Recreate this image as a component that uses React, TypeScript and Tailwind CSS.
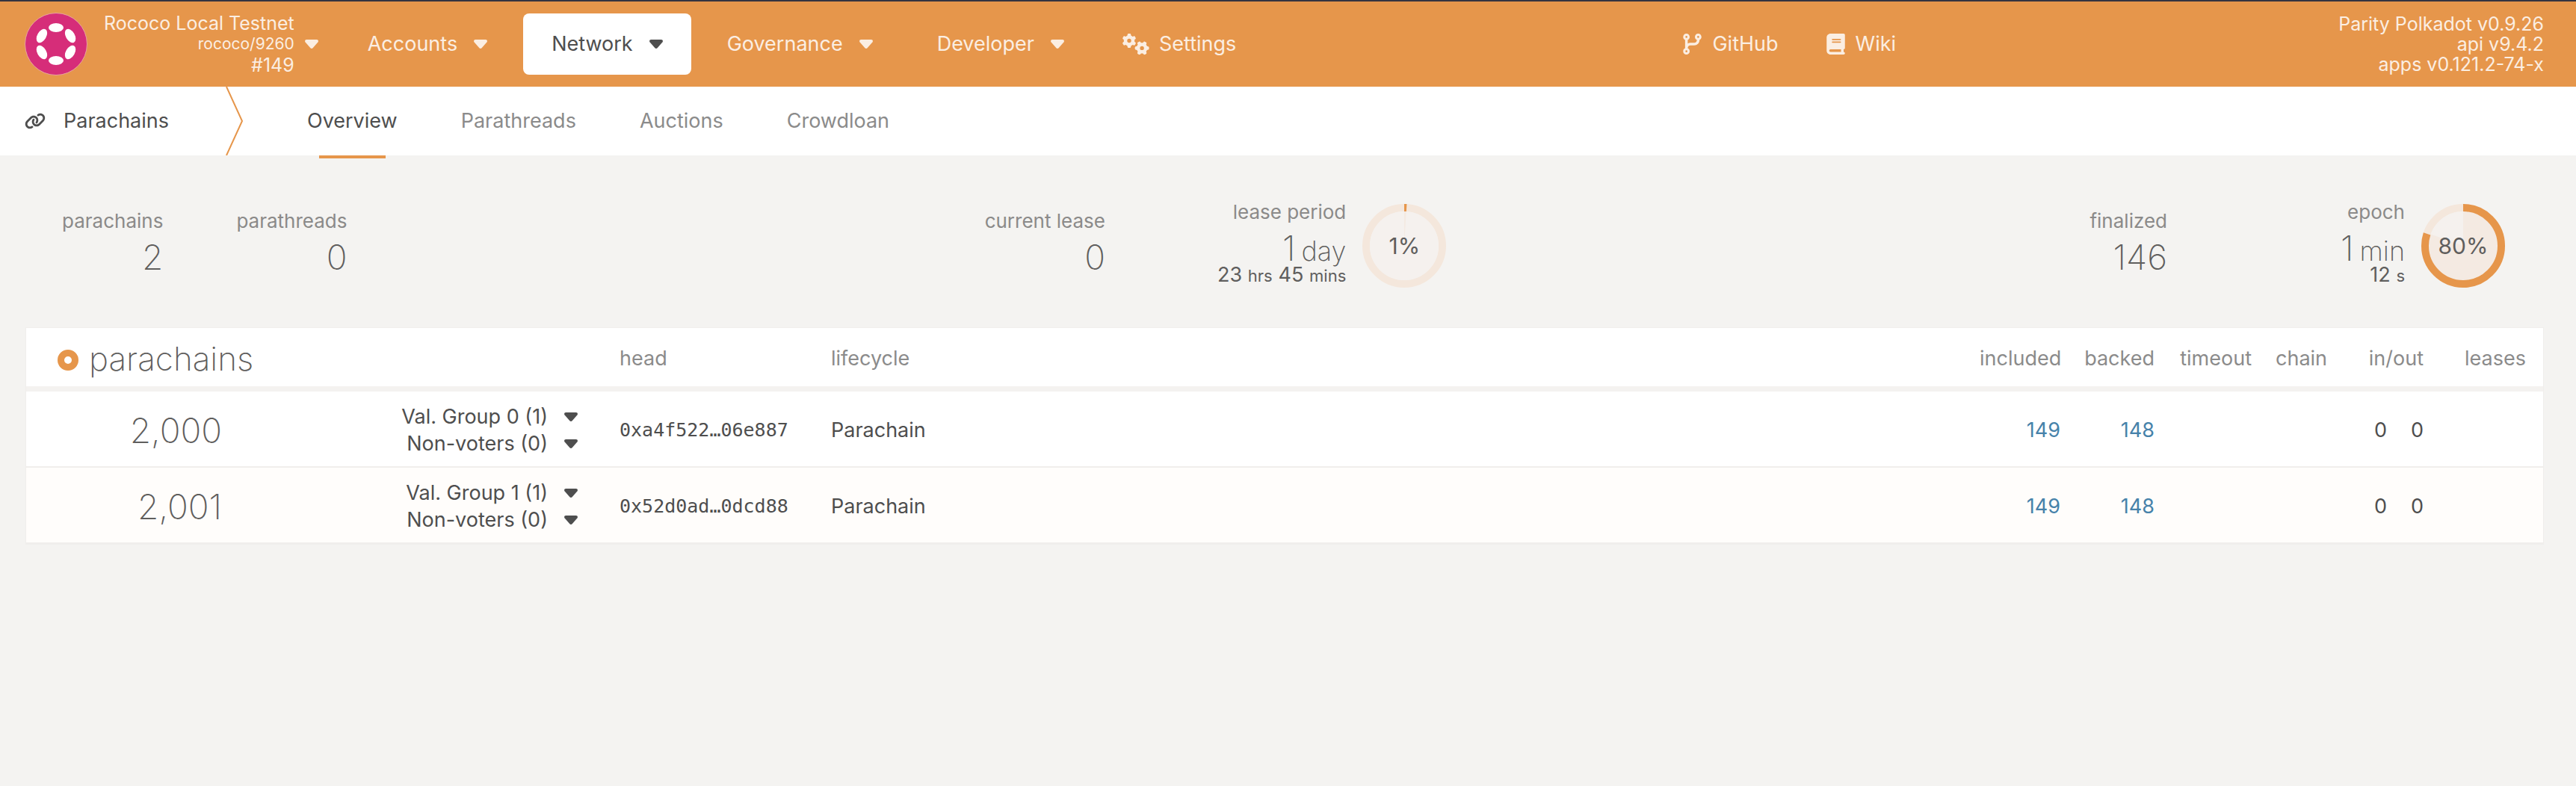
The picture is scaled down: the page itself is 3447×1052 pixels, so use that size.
import { FaBook, FaCodeBranch, FaGears, FaLink } from "react-icons/fa6";

const menu = ["Accounts", "Network", "Governance", "Developer"];
const tabs = ["Overview", "Parathreads", "Auctions", "Crowdloan"];
const rows = [
  { id: "2,000", group: "Val. Group 0 (1)", head: "0xa4f522…06e887" },
  { id: "2,001", group: "Val. Group 1 (1)", head: "0x52d0ad…0dcd88" },
];

function Caret() {
  return (
    <svg viewBox="0 0 18 12" className="h-3 w-[18px] shrink-0 fill-current" aria-hidden="true">
      <path d="M2.2 0h13.6c1.9 0 2.8 2 1.6 3.4l-6.8 7.8c-.9 1-2.3 1-3.2 0L.6 3.4C-.6 2 .3 0 2.2 0z" />
    </svg>
  );
}

function Logo() {
  return (
    <svg viewBox="0 0 84 84" className="size-[84px] shrink-0" role="img" aria-label="Network logo">
      <circle cx="42" cy="42" r="41.5" fill="#d62d79" stroke="#e8a3a0" />
      <g fill="#fff">
        {[0, 60, 120, 180, 240, 300].map((a) => (
          <ellipse key={a} cx="42" cy="20" rx="10" ry="6" transform={`rotate(${a} 42 42)`} />
        ))}
      </g>
    </svg>
  );
}

function Ring({ value }: { value: number }) {
  const len = (r: number) => `${(value / 100) * 2 * Math.PI * r} 1000`;
  return (
    <div className="grid size-28 shrink-0 place-items-center">
      <svg viewBox="0 0 112 112" className="col-start-1 row-start-1 size-28 -rotate-90" fill="none" aria-hidden="true">
        <circle cx="56" cy="56" r="51" stroke="#f4e7dc" strokeWidth="10" />
        <circle cx="56" cy="56" r="46" fill="#f5f1ee" />
        <circle cx="56" cy="56" r="23" stroke="#f4eae2" strokeWidth="46" strokeDasharray={len(23)} />
        <circle cx="56" cy="56" r="51" stroke="#e6964b" strokeWidth="10" strokeDasharray={len(51)} />
      </svg>
      <span className="z-10 col-start-1 row-start-1 text-[30px] leading-9 text-[#5f5e5d]">{value}%</span>
    </div>
  );
}

type StatProps = { label: string; value: string; unit?: string; detail?: [string, string][] };

function Stat({ label, value, unit, detail }: StatProps) {
  return (
    <div className="flex flex-col items-end pb-[10px]">
      <span className="text-[26px] leading-9 text-[#8b8a89]">{label}</span>
      <span className="mt-1 text-[46px] leading-[52px] font-extralight text-[#5f5e5d]">
        {value}
        {unit && <span className="ml-2 text-4xl">{unit}</span>}
      </span>
      {detail && (
        <span className="-mt-1 flex items-baseline gap-2 text-[27px] leading-7 text-[#5f5e5d]">
          {detail.map(([n, u]) => (
            <span key={u}>
              {n} <span className="text-[22px]">{u}</span>
            </span>
          ))}
        </span>
      )}
    </div>
  );
}

export default function App() {
  return (
    <div className="min-h-screen bg-[#f4f3f1] font-[Inter,sans-serif] text-[27px] text-[#4e4e4e]">
      <header className="flex h-[116px] items-center justify-between border-t-2 border-[#353440] bg-[#e6964b] pr-[43px] pl-[33px] text-[#fbeee2]">
        <div className="flex items-center">
          <Logo />
          <button className="ml-[22px] flex items-center gap-[14px] text-right">
            <span className="flex flex-col text-[25px] leading-7">
              <span>Rococo Local Testnet</span>
              <span className="text-[21px]">rococo/9260</span>
              <span>#149</span>
            </span>
            <Caret />
          </button>
          <nav className="ml-7 flex items-center gap-[10px]">
            {menu.map((m) => (
              <button
                key={m}
                className={
                  m === "Network"
                    ? "flex h-[82px] items-center gap-[22px] rounded-lg bg-white px-[38px] text-[#4e4e4e]"
                    : "flex h-[82px] items-center gap-[22px] px-[38px]"
                }
              >
                {m}
                <Caret />
              </button>
            ))}
            <a href="#settings" className="flex h-[82px] items-center gap-[13px] px-[30px]">
              <FaGears className="size-9" />
              Settings
            </a>
          </nav>
        </div>
        <nav className="mr-6 flex items-center gap-[64px]">
          <a href="#github" className="flex items-center gap-[14px]">
            <FaCodeBranch className="h-7 w-[25px]" />
            GitHub
          </a>
          <a href="#wiki" className="flex items-center gap-[14px]">
            <FaBook className="h-7 w-[25px]" />
            Wiki
          </a>
        </nav>
        <div className="text-right text-[25px] leading-[27px]">
          <div>Parity Polkadot v0.9.26</div>
          <div>api v9.4.2</div>
          <div>apps v0.121.2-74-x</div>
        </div>
      </header>

      <div className="flex h-[92px] items-stretch bg-white pl-[33px]">
        <h1 className="flex w-[269px] items-center gap-6">
          <FaLink className="size-7" />
          Parachains
        </h1>
        <svg viewBox="0 0 24 92" className="h-[92px] w-6" fill="none" stroke="#e6964b" strokeWidth="2" aria-hidden="true">
          <path d="M1 0l21 46L1 92" />
        </svg>
        <nav className="ml-[85px] flex items-stretch gap-[85px]">
          {tabs.map((t) => (
            <a
              key={t}
              href={`#${t.toLowerCase()}`}
              className={t === "Overview" ? "relative flex items-center" : "flex items-center text-[#8b8b8b]"}
            >
              {t}
              {t === "Overview" && <span className="absolute inset-x-4 top-full h-1 bg-[#e6964b]" />}
            </a>
          ))}
        </nav>
      </div>

      <main className="pr-[43px] pl-[34px]">
        <section className="flex h-[230px] items-center justify-between pt-3 pr-[52px] pl-[49px]">
          <div className="flex gap-[98px]">
            <Stat label="parachains" value="2" />
            <Stat label="parathreads" value="0" />
          </div>
          <div className="mr-2 flex items-center gap-[150px]">
            <Stat label="current lease" value="0" />
            <div className="flex items-center gap-[22px]">
              <Stat label="lease period" value="1" unit="day" detail={[["23", "hrs"], ["45", "mins"]]} />
              <Ring value={1} />
            </div>
          </div>
          <div className="flex items-center gap-[232px]">
            <Stat label="finalized" value="146" />
            <div className="flex items-center gap-[22px]">
              <Stat label="epoch" value="1" unit="min" detail={[["12", "s"]]} />
              <Ring value={80} />
            </div>
          </div>
        </section>

        <table className="w-full table-fixed border-separate border-spacing-0 border border-[#f0eeec] bg-white text-left">
          <colgroup>
            <col className="w-[278px]" />
            <col className="w-[500px]" />
            <col className="w-[283px]" />
            <col />
            <col className="w-[140px]" />
            <col className="w-[126px]" />
            <col className="w-[130px]" />
            <col className="w-[101px]" />
            <col className="w-[129px]" />
            <col className="w-[144px]" />
          </colgroup>
          <thead>
            <tr className="h-[85px] *:border-b-[7px] *:border-[#f4f2f0] *:px-4 *:pt-1 *:font-normal *:text-[#8b8b8b]">
              <th colSpan={2}>
                <h2 className="flex items-baseline gap-[14px] pl-[26px] text-[44px] leading-[52px] font-extralight text-[#5f5e5d]">
                  <span className="size-7 rounded-full border-[9px] border-[#e6964b]" />
                  parachains
                </h2>
              </th>
              <th>head</th>
              <th>lifecycle</th>
              <th className="text-right">included</th>
              <th className="text-right">backed</th>
              <th className="text-right">timeout</th>
              <th className="text-right">chain</th>
              <th className="text-right">in/out</th>
              <th className="pr-[23px]! text-right">leases</th>
            </tr>
          </thead>
          <tbody>
            {rows.map((r) => (
              <tr
                key={r.id}
                className="h-[102px] *:border-b-2 *:border-[#f0eeec] *:px-4 *:pt-1 last:bg-[#fffdfb]"
              >
                <td className="text-right text-[46px] font-extralight text-[#5f5e5d]">{r.id}</td>
                <td>
                  <div className="flex flex-col items-end pr-6">
                    {[r.group, "Non-voters (0)"].map((g) => (
                      <button key={g} className="flex items-center gap-[22px] leading-9">
                        {g}
                        <Caret />
                      </button>
                    ))}
                  </div>
                </td>
                <td className="font-['DejaVu_Sans_Mono',monospace] text-[25px]">{r.head}</td>
                <td>Parachain</td>
                <td className="text-right text-[#4682aa]"><a href="#149">149</a></td>
                <td className="text-right text-[#4682aa]"><a href="#148">148</a></td>
                <td />
                <td />
                <td>
                  <div className="flex justify-end gap-8">
                    <span>0</span>
                    <span>0</span>
                  </div>
                </td>
                <td />
              </tr>
            ))}
          </tbody>
        </table>
      </main>
    </div>
  );
}
